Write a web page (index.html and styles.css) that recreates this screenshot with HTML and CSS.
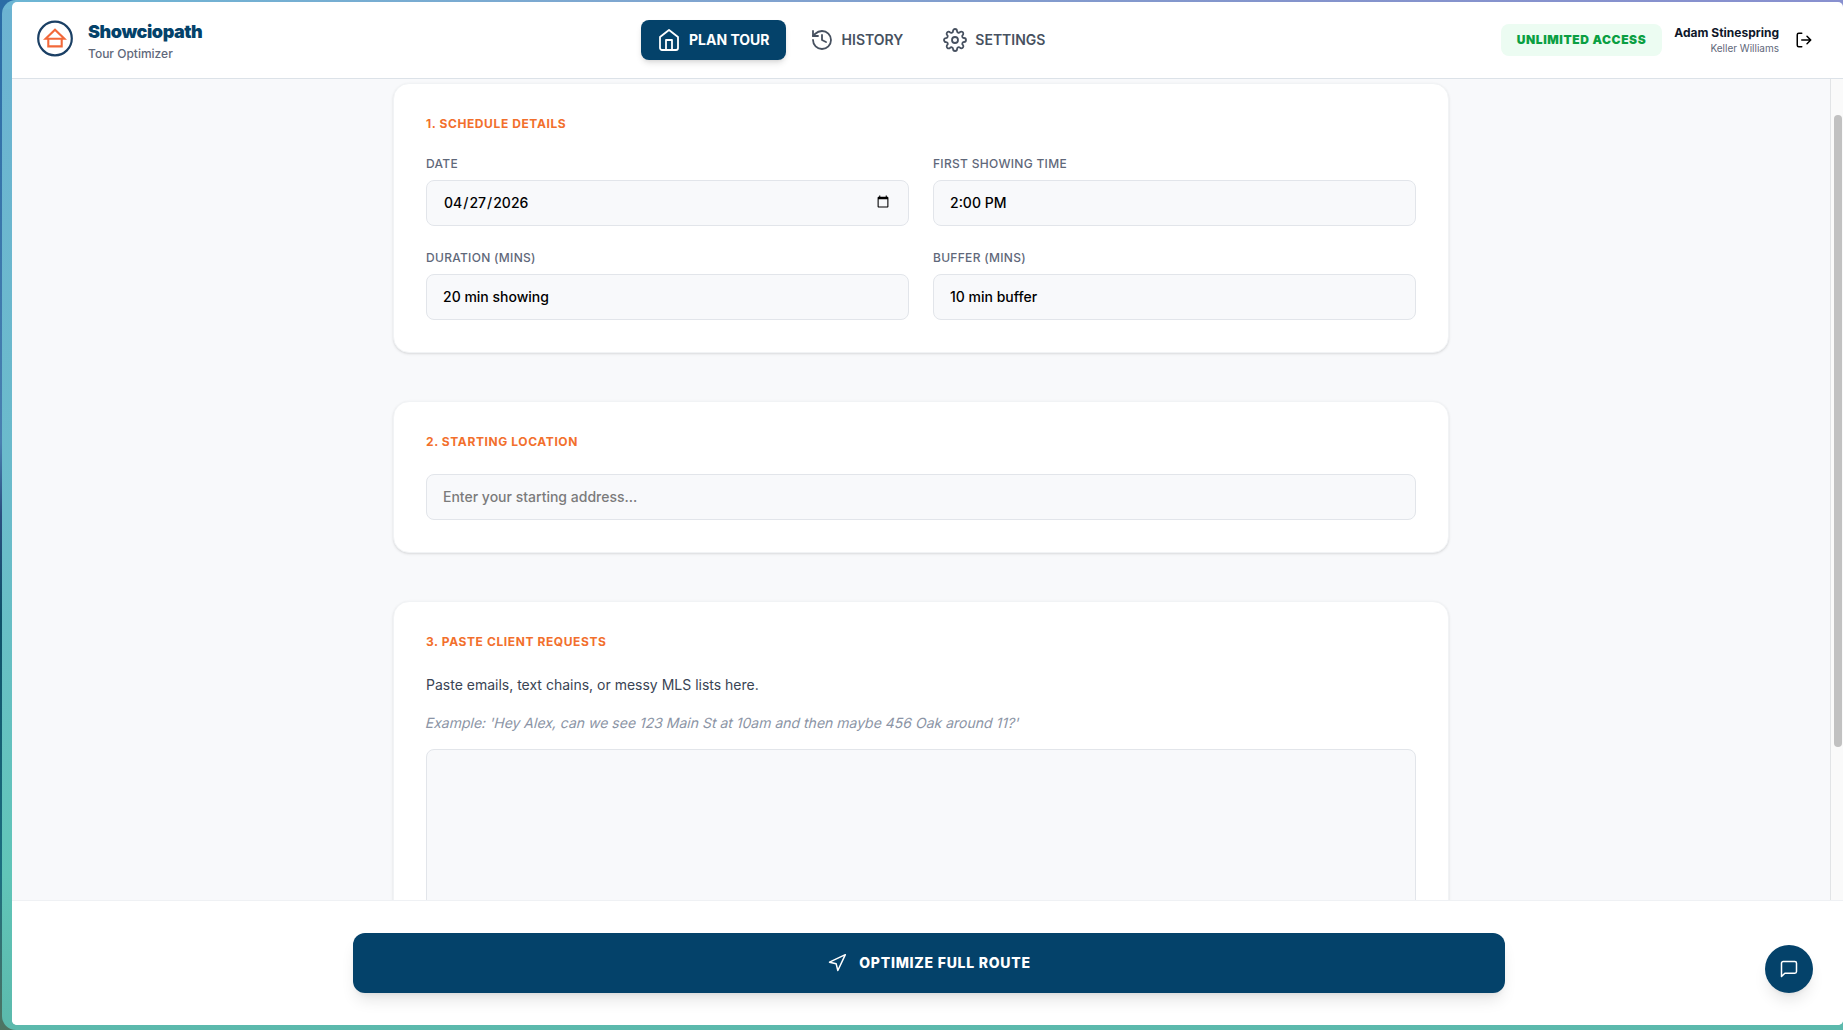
FILE: index.html
```
<!DOCTYPE html>
<html lang="en-US">

<head>
    <meta charset="UTF-8">
    <meta name="viewport" content="width=device-width, initial-scale=1.0">
    <title>Showciopath - Tour Optimizer</title>
    <link rel="stylesheet" href="styles.css">
</head>

<body>
    <div class="frame">
        <div class="window">
            <header class="header">
                <div class="brand">
                    <svg class="brand-logo" viewBox="0 0 39 40" fill="none">
                        <circle cx="18" cy="18.5" r="16.8" stroke="#1b4065" stroke-width="2.2" />
                        <path d="M8.6 18.8 18 9.8l9.4 9zM11.3 18.8v7.6h13.4v-7.6" stroke="#f2693a" stroke-width="2.1" />
                    </svg>
                    <div class="brand-text">
                        <h1 class="brand-name">Showciopath</h1>
                        <p class="brand-sub">Tour Optimizer</p>
                    </div>
                </div>

                <nav class="nav">
                    <button class="nav-btn active">
                        <svg class="icon" viewBox="0 0 24 24">
                            <path d="m3 9 9-7 9 7v11a2 2 0 0 1-2 2H5a2 2 0 0 1-2-2z" />
                            <path d="M9 22V12h6v10" />
                        </svg>
                        <span class="btn-text">PLAN TOUR</span>
                    </button>
                    <button class="nav-btn">
                        <svg class="icon" viewBox="0 0 24 24">
                            <path d="M3 12a9 9 0 1 0 9-9 9.75 9.75 0 0 0-6.74 2.74L3 8" />
                            <path d="M3 3v5h5" />
                            <path d="M12 7v5l4 2" />
                        </svg>
                        <span class="btn-text">HISTORY</span>
                    </button>
                    <button class="nav-btn">
                        <svg class="icon" viewBox="0 0 24 24">
                            <circle cx="12" cy="12" r="3" />
                            <path d="M19.4 15a1.65 1.65 0 0 0 .33 1.82l.06.06a2 2 0 0 1 0 2.83 2 2 0 0 1-2.83 0l-.06-.06a1.65 1.65 0 0 0-1.82-.33 1.65 1.65 0 0 0-1 1.51V21a2 2 0 0 1-2 2 2 2 0 0 1-2-2v-.09A1.65 1.65 0 0 0 9 19.4a1.65 1.65 0 0 0-1.82.33l-.06.06a2 2 0 0 1-2.83 0 2 2 0 0 1 0-2.83l.06-.06a1.65 1.65 0 0 0 .33-1.82 1.65 1.65 0 0 0-1.51-1H3a2 2 0 0 1-2-2 2 2 0 0 1 2-2h.09A1.65 1.65 0 0 0 4.6 9a1.65 1.65 0 0 0-.33-1.82l-.06-.06a2 2 0 0 1 0-2.83 2 2 0 0 1 2.83 0l.06.06a1.65 1.65 0 0 0 1.82.33H9a1.65 1.65 0 0 0 1-1.51V3a2 2 0 0 1 2-2 2 2 0 0 1 2 2v.09a1.65 1.65 0 0 0 1 1.51 1.65 1.65 0 0 0 1.82-.33l.06-.06a2 2 0 0 1 2.83 0 2 2 0 0 1 0 2.83l-.06.06a1.65 1.65 0 0 0-.33 1.82V9a1.65 1.65 0 0 0 1.51 1H21a2 2 0 0 1 2 2 2 2 0 0 1-2 2h-.09a1.65 1.65 0 0 0-1.51 1z" />
                        </svg>
                        <span class="btn-text">SETTINGS</span>
                    </button>
                </nav>

                <div class="account">
                    <span class="badge">UNLIMITED ACCESS</span>
                    <div class="user">
                        <p class="user-name">Adam Stinespring</p>
                        <p class="user-company">Keller Williams</p>
                    </div>
                    <button class="logout" aria-label="Log out">
                        <svg class="icon icon-logout" viewBox="0 0 24 24">
                            <path d="M9 21H5a2 2 0 0 1-2-2V5a2 2 0 0 1 2-2h4" />
                            <path d="m16 17 5-5-5-5M21 12H9" />
                        </svg>
                    </button>
                </div>
            </header>

            <div class="body">
                <main class="content">
                    <section class="card">
                        <h2 class="card-title">1. SCHEDULE DETAILS</h2>
                        <div class="grid">
                            <div class="field">
                                <label class="label" for="date">DATE</label>
                                <input class="input" id="date" type="date" value="2026-04-27">
                            </div>
                            <div class="field">
                                <label class="label" for="time">FIRST SHOWING TIME</label>
                                <select class="input" id="time">
                                    <option>2:00 PM</option>
                                </select>
                            </div>
                            <div class="field">
                                <label class="label" for="duration">DURATION (MINS)</label>
                                <select class="input" id="duration">
                                    <option>20 min showing</option>
                                </select>
                            </div>
                            <div class="field">
                                <label class="label" for="buffer">BUFFER (MINS)</label>
                                <select class="input" id="buffer">
                                    <option>10 min buffer</option>
                                </select>
                            </div>
                        </div>
                    </section>

                    <section class="card">
                        <h2 class="card-title">2. STARTING LOCATION</h2>
                        <input class="input" type="text" placeholder="Enter your starting address...">
                    </section>

                    <section class="card">
                        <h2 class="card-title">3. PASTE CLIENT REQUESTS</h2>
                        <p class="hint">Paste emails, text chains, or messy MLS lists here.</p>
                        <p class="example">Example: 'Hey Alex, can we see 123 Main St at 10am and then maybe 456 Oak around 11?'</p>
                        <textarea class="input requests"></textarea>
                    </section>
                </main>
                <div class="scrollbar">
                    <div class="scrollbar-thumb"></div>
                </div>
            </div>

            <footer class="footer">
                <button class="optimize">
                    <svg class="icon icon-sm" viewBox="0 0 24 24">
                        <path d="m3 11 19-9-9 19-2-8z" />
                    </svg>
                    <span class="btn-text">OPTIMIZE FULL ROUTE</span>
                </button>
            </footer>
        </div>
    </div>

    <button class="chat" aria-label="Chat">
        <svg class="icon icon-sm" viewBox="0 0 24 24">
            <path d="M21 15a2 2 0 0 1-2 2H7l-4 4V5a2 2 0 0 1 2-2h14a2 2 0 0 1 2 2z" />
        </svg>
    </button>
</body>

</html>
```
FILE: styles.css
```
* {
    margin: 0;
    padding: 0;
    box-sizing: border-box;
}

body {
    height: 100vh;
    padding-left: 2px;
    overflow: hidden;
    font-family: Inter, "Liberation Sans", sans-serif;
    background: linear-gradient(180deg, #2a6ca6 0%, #4a80b0 43%, #2b4f80 50%, #0f5068 60%, #1d6f80 85%, #4f7462 100%);
}

button {
    border: none;
    background: none;
    font-family: inherit;
    cursor: pointer;
}

/* Gradient border around the app */
.frame {
    height: 100vh;
    padding: 2px 0 5px 10px;
    border-radius: 14px 0 0 14px;
    background:
        linear-gradient(90deg, #6cb6d4 0%, #7fa6d0 35%, #8494cc 70%, #8890cf 100%) top / 100% 9px no-repeat,
        linear-gradient(180deg, #6cb3d2 0%, #6bbccb 50%, #61c5b8 85%, #5bb9ac 100%);
}

.window {
    display: flex;
    flex-direction: column;
    height: 100%;
    overflow: hidden;
    border-radius: 5px;
    background: #fff;
}

.icon {
    flex-shrink: 0;
    width: 24px;
    height: 24px;
    fill: none;
    stroke: currentColor;
    stroke-width: 1.8;
    stroke-linecap: round;
    stroke-linejoin: round;
}

.icon-sm {
    width: 20px;
    height: 20px;
    stroke-width: 1.8;
}

.icon-logout {
    width: 18px;
    height: 18px;
    stroke-width: 2;
}

.btn-text {
    padding-bottom: 2px;
}

/* Header */
.header {
    display: grid;
    grid-template-columns: 604px 1fr auto;
    align-items: center;
    height: 77px;
    padding: 0 30px 0 25px;
    border-bottom: 1px solid #dce2e8;
}

.brand {
    display: flex;
    align-items: center;
    gap: 12px;
}

.brand-logo {
    width: 39px;
    height: 40px;
}

.brand-text {
    padding-top: 6px;
}

.brand-name {
    font-size: 18px;
    font-weight: 900;
    line-height: 22px;
    letter-spacing: -0.45px;
    color: #04426a;
}

.brand-sub {
    font-size: 12px;
    font-weight: 500;
    line-height: 22px;
    color: #5f687a;
}

.nav {
    display: flex;
    gap: 8px;
}

.nav-btn {
    display: flex;
    align-items: center;
    gap: 8px;
    height: 40px;
    padding: 0 16px;
    border-radius: 8px;
    font-size: 14px;
    font-weight: 600;
    color: #475160;
}

.nav-btn.active {
    font-weight: 700;
    color: #fff;
    background: #04426a;
    box-shadow: 0 4px 6px -1px rgba(0, 0, 0, 0.12), 0 2px 4px -2px rgba(0, 0, 0, 0.1);
}

.account {
    display: flex;
    align-items: center;
}

.badge {
    height: 32px;
    padding: 0 16px;
    border-radius: 8px;
    font-size: 12px;
    font-weight: 900;
    line-height: 32px;
    letter-spacing: 0.6px;
    color: #0a9f42;
    background: #ecfcf2;
}

.user {
    margin-left: 12px;
    text-align: right;
}

.user-name {
    font-size: 12px;
    font-weight: 700;
    line-height: 16px;
    color: #0f172a;
}

.user-company {
    font-size: 10px;
    line-height: 15px;
    color: #5f687a;
}

.logout {
    display: flex;
    margin-left: 16px;
    color: #000;
}

/* Scroll area */
.body {
    display: flex;
    height: 821px;
    overflow: hidden;
    background: #f8f9fb;
}

.content {
    display: flex;
    flex: 1;
    flex-direction: column;
    align-items: center;
    gap: 48px;
    padding-top: 4px;
}

.card {
    flex-shrink: 0;
    width: 1056px;
    padding: 32px;
    border: 1px solid #f1f3f5;
    border-radius: 16px;
    background: #fff;
    box-shadow: 0 1px 3px rgba(0, 0, 0, 0.1), 0 1px 2px -1px rgba(0, 0, 0, 0.1);
}

.card-title {
    margin-bottom: 24px;
    font-size: 12px;
    font-weight: 700;
    line-height: 16px;
    letter-spacing: 0.6px;
    color: #f26f2c;
}

.grid {
    display: grid;
    grid-template-columns: 1fr 1fr;
    gap: 24px;
}

.label {
    display: block;
    margin-bottom: 8px;
    font-size: 12px;
    font-weight: 500;
    line-height: 16px;
    letter-spacing: 0.3px;
    color: #5f687a;
}

.input {
    display: block;
    width: 100%;
    height: 46px;
    padding: 0 16px 2px;
    border: 1px solid #e2e5ea;
    border-radius: 8px;
    outline: none;
    appearance: none;
    font-family: inherit;
    font-size: 14px;
    font-weight: 500;
    color: #000;
    background: #f8f9fb;
}

.input::placeholder {
    color: #7b7b7b;
}

.hint {
    margin-bottom: 16px;
    font-size: 14px;
    line-height: 22px;
    color: #394454;
}

/* slanted upright face, keeps the two-storey "a" */
.example {
    margin-bottom: 15px;
    font-size: 14px;
    line-height: 22px;
    color: #8b94a5;
    transform: skewX(-14deg);
}

.requests {
    height: 240px;
    resize: none;
}

.scrollbar {
    width: 13px;
    padding: 36px 1px 0 3px;
    border-left: 1px solid #e2e4e6;
    background: #fafafa;
}

.scrollbar-thumb {
    width: 8px;
    height: 632px;
    border-radius: 4px;
    background: #c1c1c1;
}

/* Footer */
.footer {
    flex: 1;
    padding: 32px 0 32px 341px;
    border-top: 1px solid #eff1f4;
    background: #fff;
}

.optimize {
    display: flex;
    align-items: center;
    justify-content: center;
    gap: 12px;
    width: 1152px;
    height: 60px;
    border-radius: 12px;
    font-size: 14px;
    font-weight: 800;
    letter-spacing: 0.75px;
    color: #fff;
    background: #04426a;
    box-shadow: 0 10px 15px -3px rgba(0, 0, 0, 0.1), 0 4px 6px -4px rgba(0, 0, 0, 0.1);
}

.chat {
    position: fixed;
    right: 30px;
    bottom: 37px;
    display: flex;
    align-items: center;
    justify-content: center;
    width: 48px;
    height: 48px;
    border-radius: 50%;
    color: #fff;
    background: #04426a;
    box-shadow: 0 10px 15px -3px rgba(0, 0, 0, 0.1), 0 4px 6px -4px rgba(0, 0, 0, 0.1);
}
```
